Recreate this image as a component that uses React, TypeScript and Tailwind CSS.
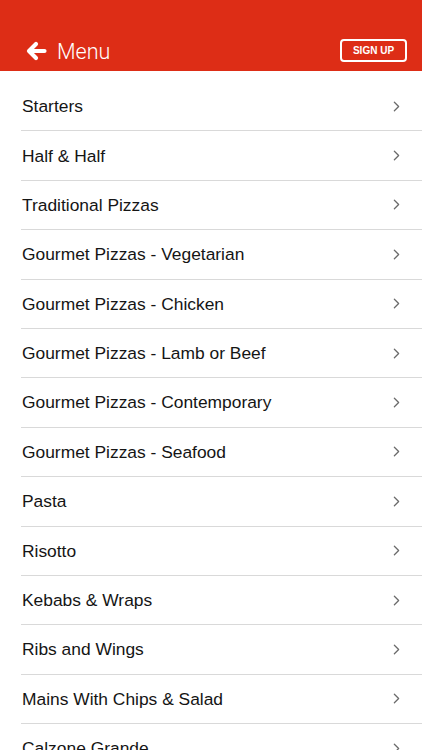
import { ChevronRight } from "lucide-react";

const items = [
  "Starters",
  "Half & Half",
  "Traditional Pizzas",
  "Gourmet Pizzas - Vegetarian",
  "Gourmet Pizzas - Chicken",
  "Gourmet Pizzas - Lamb or Beef",
  "Gourmet Pizzas - Contemporary",
  "Gourmet Pizzas - Seafood",
  "Pasta",
  "Risotto",
  "Kebabs & Wraps",
  "Ribs and Wings",
  "Mains With Chips & Salad",
  "Calzone Grande",
];

export default function App() {
  return (
    <div className="w-[422px] h-[750px] overflow-hidden bg-white font-['Liberation_Sans',Arial,sans-serif]">
      {/* Header */}
      <header className="h-[71px] bg-[#dd2d16] flex items-end pb-[9px] pl-[25px] pr-[15px] justify-between">
        <div className="flex items-center gap-[10px]">
          <svg width="22" height="20" viewBox="0 0 22 20" fill="none">
            <path
              d="M19.5 10H4.5M11 3L4 10L11 17"
              stroke="white"
              strokeWidth="4.2"
              strokeLinecap="round"
              strokeLinejoin="round"
            />
          </svg>
          <span className="text-white text-[21.5px] font-light font-['Roboto',sans-serif] leading-none">
            Menu
          </span>
        </div>
        <button className="w-[67px] h-[23px] border-2 border-white rounded-[4px] text-white text-[10px] font-bold leading-none flex items-center justify-center">
          SIGN UP
        </button>
      </header>

      {/* List */}
      <ul className="pt-[11px]">
        {items.map(item => (
          <li
            key={item}
            className="ml-[21px] h-[49.4px] border-b border-[#d9d9d9] flex items-center justify-between pr-[17px]"
          >
            <span className="pl-px text-[17.4px] text-[#151515]">{item}</span>
            <ChevronRight className="w-[17px] h-[17px] text-[#6b6b6b]" strokeWidth={1.8} />
          </li>
        ))}
      </ul>
    </div>
  );
}
